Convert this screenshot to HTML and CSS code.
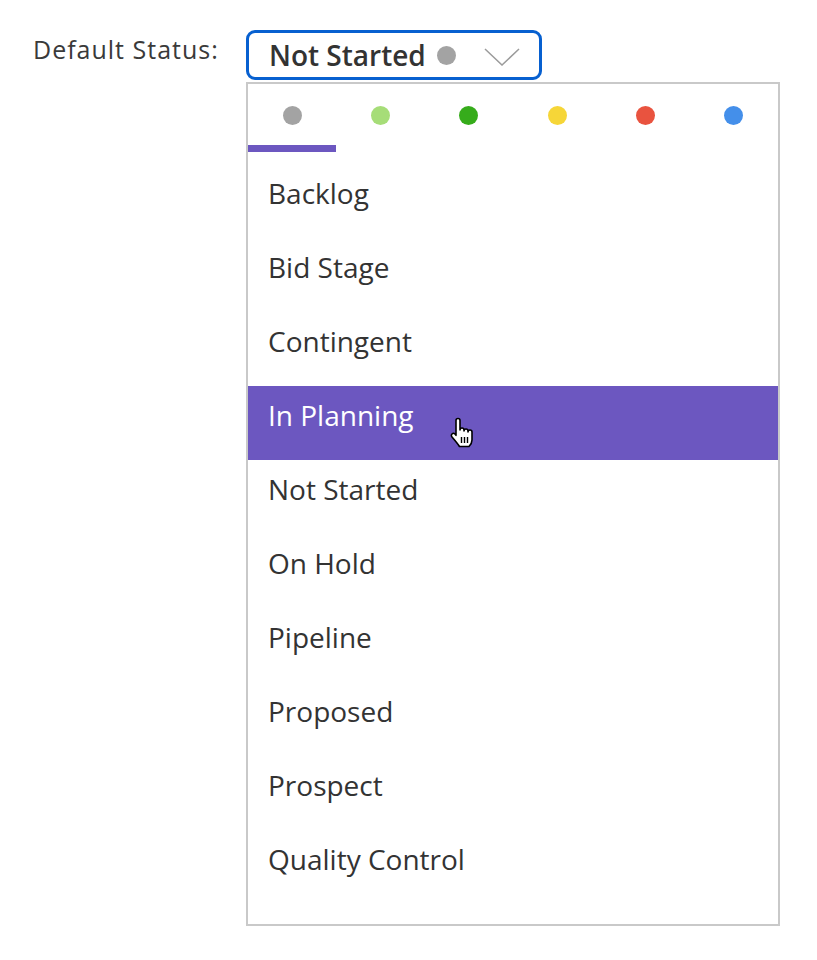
FILE: index.html
```html
<!DOCTYPE html>
<html lang="en">
<head>
<meta charset="utf-8">
<title>Default Status</title>
<link rel="stylesheet" href="styles.css">
</head>
<body>
  <div class="field">
    <label class="field-label">Default Status:</label>
    <div class="control">
      <div class="select">
        <span class="select-value">Not Started</span>
        <span class="dot dot-gray select-dot"></span>
        <svg class="chevron" width="36" height="18" viewBox="0 0 36 18" aria-hidden="true">
          <polyline points="1,1 18,17 35,1" fill="none" stroke="#9b9b9b" stroke-width="1.5"/>
        </svg>
      </div>
      <div class="menu">
        <div class="tabs">
          <div class="tab active"><span class="dot dot-gray"></span></div>
          <div class="tab"><span class="dot dot-lime"></span></div>
          <div class="tab"><span class="dot dot-green"></span></div>
          <div class="tab"><span class="dot dot-yellow"></span></div>
          <div class="tab"><span class="dot dot-red"></span></div>
          <div class="tab"><span class="dot dot-blue"></span></div>
        </div>
        <ul class="options">
          <li class="option">Backlog</li>
          <li class="option">Bid Stage</li>
          <li class="option">Contingent</li>
          <li class="option hovered">In Planning
            <svg class="pointer" width="26" height="33" viewBox="0 0 26 33" aria-hidden="true">
              <path d="M7 4.5a2 2 0 0 1 4 0V14a2 2 0 0 1 4 0v1a2 2 0 0 1 4 0v1a2 2 0 0 1 4 0v8c0 3-1.5 5-3 6.5H10.5C9 28 6 24.5 3 21a2 2 0 0 1 3-3l1 1.3Z" fill="#fff" stroke="#000" stroke-width="1.6" stroke-linejoin="round"/>
              <path d="M12.5 21v6M15.5 21v6M18.5 21v6" stroke="#000" stroke-width="1.4"/>
            </svg>
          </li>
          <li class="option">Not Started</li>
          <li class="option">On Hold</li>
          <li class="option">Pipeline</li>
          <li class="option">Proposed</li>
          <li class="option">Prospect</li>
          <li class="option">Quality Control</li>
        </ul>
      </div>
    </div>
  </div>
</body>
</html>
```
FILE: styles.css
```css
* {
  box-sizing: border-box;
}

body {
  margin: 0;
  background: #fff;
  font-family: "Open Sans", "Liberation Sans", sans-serif;
  color: #333;
}

.field {
  display: flex;
  align-items: flex-start;
  padding: 30px 0 0 33px;
}

.field-label {
  width: 213px;
  margin-top: 2px;
  font-size: 25px;
  letter-spacing: 1px;
  color: #3a3a3a;
}

.control {
  display: flex;
  flex-direction: column;
}

.select {
  width: 296px;
  height: 50px;
  border: 3px solid #0760d0;
  border-radius: 9px;
  display: flex;
  align-items: center;
  padding: 0 19px 0 20px;
}

.select-value {
  font-size: 28px;
  font-weight: 600;
  color: #333;
}

.select-dot {
  margin-left: 11px;
}

.chevron {
  margin-left: auto;
  margin-top: 3px;
}

.dot {
  display: block;
  width: 19px;
  height: 19px;
  border-radius: 50%;
}

.dot-gray { background: #a3a3a3; }
.dot-lime { background: #a6dd78; }
.dot-green { background: #36ac1b; }
.dot-yellow { background: #f6d638; }
.dot-red { background: #e9533f; }
.dot-blue { background: #448fea; }

.menu {
  width: 534px;
  height: 844px;
  margin-top: 2px;
  border: 2px solid #c9c9c9;
  padding-bottom: 20px;
}

.tabs {
  display: grid;
  grid-template-columns: repeat(6, 1fr);
  margin-bottom: 12px;
}

.tab {
  height: 68px;
  display: flex;
  justify-content: center;
  padding-top: 22px;
  border-bottom: 7px solid transparent;
}

.tab.active {
  border-bottom-color: #6c57c0;
}

.options {
  list-style: none;
  margin: 0;
  padding: 0;
}

.option {
  position: relative;
  height: 74px;
  padding: 10px 0 0 20px;
  font-size: 28px;
  line-height: 38px;
  color: #333;
}

.option.hovered {
  background: #6c57c0;
  color: #fff;
}

.pointer {
  position: absolute;
  left: 201px;
  top: 30px;
}
```
